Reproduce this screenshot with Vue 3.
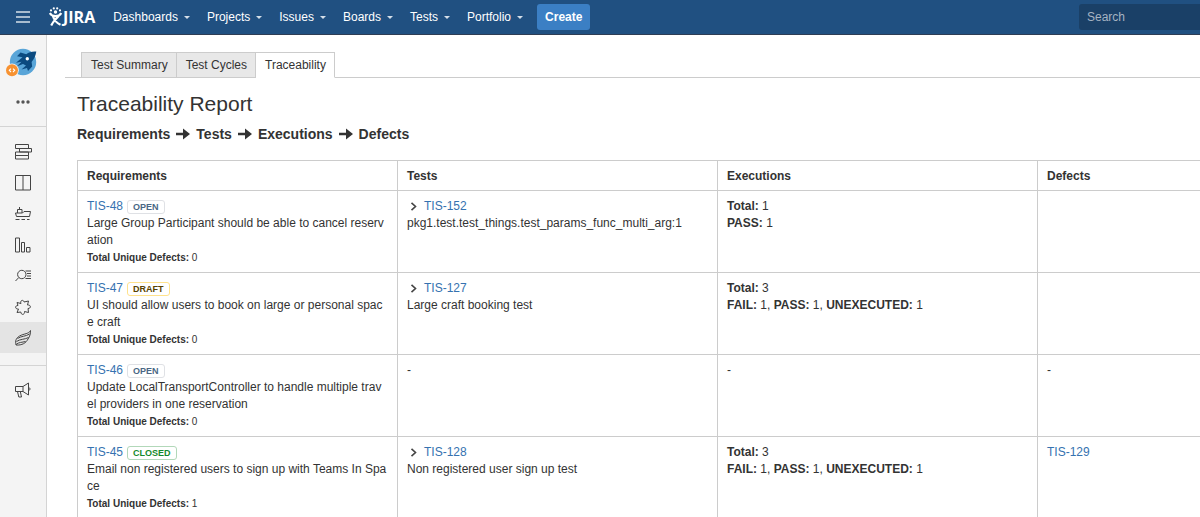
<template>
  <div class="page">
    <header class="topbar">
      <button class="menu-btn" type="button" aria-label="Menu">
        <svg width="14" height="12" viewBox="0 0 14 12">
          <path d="M0 1h14M0 6h14M0 11h14" stroke="#d5dfe9" stroke-width="1.6" />
        </svg>
      </button>
      <a class="logo" href="#">
        <svg width="14" height="20" viewBox="0 0 14 20" fill="#fff">
          <circle cx="2" cy="3.4" r="1.1" />
          <circle cx="4.8" cy="1.4" r="1.1" />
          <circle cx="8.2" cy="1.4" r="1.1" />
          <circle cx="11" cy="3.4" r="1.1" />
          <circle cx="6.5" cy="5" r="1.7" />
          <path
            d="M.8 6C2 8.500 4 9.200 6.500 9.200S11 8.500 12.200 6M10 8.500C8 11.500 5 13 2.200 18.400M3.600 8.500c1.500 4.500 4 7.500 7.900 9.300"
            fill="none"
            stroke="#fff"
            stroke-width="2.2"
          />
        </svg>
        <span>JIRA</span>
      </a>
      <nav class="nav">
        <button v-for="item in navItems" :key="item" type="button" class="nav-item">
          {{ item }}<i class="caret"></i>
        </button>
      </nav>
      <button class="create" type="button">Create</button>
      <input class="search" type="text" placeholder="Search" aria-label="Search" />
    </header>

    <div class="body">
      <aside class="sidebar">
        <div class="project">
          <a class="avatar" href="#" aria-label="Project">
            <svg width="36" height="30" viewBox="0 0 36 30">
              <circle cx="18" cy="14" r="13.2" fill="#59a5d8" />
              <path
                d="M31.3 3.6C27 3.3 23.8 4.2 21.3 6.3L15.5 4.6 12 8.2 17.5 9.300 11 14.8 16.500 13.8 12 18.300 18 16 21 17.500 16.500 21.500 22 20 23 23 27.200 18.500 26.600 14C29.300 11 30.800 7.500 31.300 3.600z"
                fill="#0b4a80"
              />
              <circle cx="22.3" cy="10.7" r="1.7" fill="#fff" />
              <circle cx="7" cy="22.3" r="6.8" fill="#f4f4f4" />
              <circle cx="7" cy="22.3" r="6" fill="#f79232" />
              <path d="m6 20.600-1.700 1.700L6 24M8 20.600l1.700 1.700L8 24" fill="none" stroke="#fff" stroke-width="1.1" />
            </svg>
          </a>
          <button class="more" type="button" aria-label="More">
            <svg width="14" height="4" viewBox="0 0 14 4" fill="#555">
              <circle cx="2" cy="2" r="1.7" />
              <circle cx="7" cy="2" r="1.7" />
              <circle cx="12" cy="2" r="1.7" />
            </svg>
          </button>
        </div>
        <div class="side-group">
          <a
            v-for="icon in sideIcons"
            :key="icon.name"
            href="#"
            class="side-item"
            :class="{ active: icon.active }"
            :aria-label="icon.name"
          >
            <svg width="18" height="18" viewBox="0 0 18 18"><path :d="icon.path" /></svg>
          </a>
        </div>
        <div class="side-group last">
          <a href="#" class="side-item" aria-label="Feedback">
            <svg width="18" height="18" viewBox="0 0 18 18">
              <path
                d="M1.500 5.500h7.500v5H1.500zM9 5.500l5.500-3.500v12L9 10.500M14.500 6.500c2 .3 2 2.700 0 3M3.500 10.500l1.300 5.500h2.700l-1.200-5.500"
              />
            </svg>
          </a>
        </div>
      </aside>

      <main class="content">
        <nav class="tabs">
          <a
            v-for="tab in tabs"
            :key="tab"
            href="#"
            class="tab"
            :class="{ active: tab === activeTab }"
            @click.prevent="activeTab = tab"
          >{{ tab }}</a>
        </nav>

        <section class="report">
          <h1>Traceability Report</h1>
          <h2 class="trail">
            <template v-for="(col, i) in columns" :key="col">
              <svg v-if="i > 0" width="14" height="12" viewBox="0 0 14 12">
                <path d="M0 4.800H7V.6L14 6 7 11.400V7.200H0z" fill="#333" />
              </svg>
              <span>{{ col }}</span>
            </template>
          </h2>

          <table>
            <thead>
              <tr>
                <th v-for="col in columns" :key="col">{{ col }}</th>
              </tr>
            </thead>
            <tbody>
              <tr v-for="row in rows" :key="row.key">
                <td>
                  <div class="issue">
                    <a href="#">{{ row.key }}</a>
                    <span class="status" :class="row.status.toLowerCase()">{{ row.status }}</span>
                  </div>
                  <div>{{ row.summary }}</div>
                  <div class="unique"><b>Total Unique Defects:</b> {{ row.unique }}</div>
                </td>
                <td>
                  <template v-if="row.test">
                    <div class="issue">
                      <svg class="chevron" width="8" height="10" viewBox="0 0 8 10">
                        <path d="m1.500.8 4 3.700-4 3.700" fill="none" stroke="#444" stroke-width="1.6" />
                      </svg>
                      <a href="#">{{ row.test.key }}</a>
                    </div>
                    <div>{{ row.test.name }}</div>
                  </template>
                  <template v-else>-</template>
                </td>
                <td>
                  <template v-if="row.total">
                    <div><b>Total:</b>&nbsp;{{ row.total }}</div>
                    <div>
                      <span v-for="(run, i) in row.runs" :key="run"><b>{{ run }}:</b>&nbsp;1{{ i < row.runs.length - 1 ? ', ' : '' }}</span>
                    </div>
                  </template>
                  <template v-else>-</template>
                </td>
                <td>
                  <a v-if="row.defect && row.defect !== '-'" href="#">{{ row.defect }}</a>
                  <template v-else>{{ row.defect }}</template>
                </td>
              </tr>
            </tbody>
          </table>
        </section>
      </main>
    </div>
  </div>
</template>

<script setup>
import { ref } from 'vue'

const navItems = ['Dashboards', 'Projects', 'Issues', 'Boards', 'Tests', 'Portfolio']
const tabs = ['Test Summary', 'Test Cycles', 'Traceability']
const activeTab = ref('Traceability')
const columns = ['Requirements', 'Tests', 'Executions', 'Defects']

const sideIcons = [
  {
    name: 'Backlog',
    path: 'M1.500 1.500h13v4h-13zM5.500 5.500h12v3.500h-12zM1.500 9h13v3.500h-13zM1.500 12.500h13v3.500h-13z',
  },
  { name: 'Board', path: 'M1.500 1.500h15v14.500h-15zM9 1.500v14.500' },
  {
    name: 'Releases',
    path: 'M2.500 11.500 1.500 8h7l1.500-1.500h6.500L15.500 11.500zM3.500 8V4.500h4.500v3.500M5.500 4.500V2M1.500 14.500h4M7.500 14.500h3.500M13 14.500h2.500',
  },
  { name: 'Reports', path: 'M1.500 2h4v14h-4zM7.500 6.500h3v9.500h-3zM12.500 11.500h3.500v4.500h-3.500z' },
  {
    name: 'Issues',
    path: 'M12 7.500a4.200 4.200 0 1 1-8.400 0a4.200 4.200 0 1 1 8.400 0M4.800 10.500 1.500 14M11.500 4h5.500M13 6.500h4M13 9h4M11.500 11.500h5.500',
  },
  {
    name: 'Components',
    path: 'M7 5.500C5.500 2.500 9.500 1 10 4L14.500 3 13.500 7C17 6.500 17.500 10.500 14 10.500L14.500 14.500 10.500 13.500C11 17 7 17.500 6.800 14L3 14.500 4.500 11C1 11.500 .5 7.500 4 7.500L3 4.500z',
  },
  {
    name: 'Tests',
    active: true,
    path: 'M16.500 1.500C15 5 10 4.500 5.500 7 2 9 1 12 2 16c6 .5 10-2 12-6 2-3 2.500-5 2.500-8.500zM15.500 5C12 7.500 7 7 3.500 9.500M14.500 8.500C11 10.500 6 10 2.500 12.500M11.500 12.500C8 13.500 5 13 2 15.500',
  },
]

const rows = [
  {
    key: 'TIS-48',
    status: 'OPEN',
    summary: 'Large Group Participant should be able to cancel reservation',
    unique: 0,
    test: { key: 'TIS-152', name: 'pkg1.test.test_things.test_params_func_multi_arg:1' },
    total: 1,
    runs: ['PASS'],
    defect: '',
  },
  {
    key: 'TIS-47',
    status: 'DRAFT',
    summary: 'UI should allow users to book on large or personal space craft',
    unique: 0,
    test: { key: 'TIS-127', name: 'Large craft booking test' },
    total: 3,
    runs: ['FAIL', 'PASS', 'UNEXECUTED'],
    defect: '',
  },
  {
    key: 'TIS-46',
    status: 'OPEN',
    summary: 'Update LocalTransportController to handle multiple travel providers in one reservation',
    unique: 0,
    defect: '-',
  },
  {
    key: 'TIS-45',
    status: 'CLOSED',
    summary: 'Email non registered users to sign up with Teams In Space',
    unique: 1,
    test: { key: 'TIS-128', name: 'Non registered user sign up test' },
    total: 3,
    runs: ['FAIL', 'PASS', 'UNEXECUTED'],
    defect: 'TIS-129',
  },
]
</script>

<style>
body {
  margin: 0;
  background: #fff;
}
</style>

<style scoped>
.page {
  display: flex;
  flex-direction: column;
  height: 100vh;
  overflow: hidden;
  font-family: "Liberation Sans", Arial, sans-serif;
  font-size: 12px;
  line-height: 17px;
  color: #333;
}
a {
  color: #3572b0;
  text-decoration: none;
}
button {
  border: 0;
  padding: 0;
  background: none;
  font: inherit;
  cursor: pointer;
}

/* top bar */
.topbar {
  display: flex;
  align-items: center;
  flex: none;
  height: 35px;
  background: #205081;
  border-bottom: 1px solid #2e3d54;
  box-sizing: border-box;
}
.menu-btn {
  display: flex;
  margin-left: 16px;
}
.logo {
  display: flex;
  align-items: center;
  margin-left: 19px;
  color: #fff;
  font-family: "Open Sans", sans-serif;
  font-size: 16px;
  font-weight: 700;
}
.nav {
  display: flex;
  gap: 17px;
  margin-left: 18px;
}
.nav-item {
  display: flex;
  align-items: center;
  gap: 6px;
  color: #fff;
}
.caret {
  border: 3px solid transparent;
  border-top-color: #d5dfe9;
  border-bottom: 0;
}
.create {
  height: 26px;
  margin-left: 14px;
  padding: 0 8px;
  border-radius: 3px;
  background: #3b7fc4;
  color: #fff;
  font-weight: 700;
}
.search {
  width: 121px;
  height: 26px;
  margin-left: auto;
  padding: 0 8px;
  border: 0;
  border-radius: 3px 0 0 3px;
  background: #1a4067;
  color: #fff;
  font: inherit;
  box-sizing: border-box;
}
.search::placeholder {
  color: #a6b3c2;
}

.body {
  display: flex;
  flex: 1;
  min-height: 0;
}

/* sidebar */
.sidebar {
  flex: none;
  width: 47px;
  background: #f4f4f4;
  border-right: 1px solid #d4d4d4;
  box-sizing: border-box;
}
.project {
  display: flex;
  flex-direction: column;
  align-items: center;
  gap: 22px;
  padding: 13px 0 22px;
}
.avatar,
.more {
  display: flex;
}
.side-group {
  padding: 9px 0 12px;
  border-top: 1px solid #d4d4d4;
}
.side-group.last {
  padding: 8px 0;
}
.side-item {
  display: flex;
  align-items: center;
  justify-content: center;
  height: 31px;
}
.side-item.active {
  background: #e4e4e4;
}
.side-item path {
  fill: none;
  stroke: #444;
}

/* content */
.content {
  flex: 1;
  min-width: 0;
  overflow: hidden;
  padding: 17px 0 0 18px;
}
.tabs {
  display: flex;
  padding-left: 16px;
  border-bottom: 1px solid #ccc;
}
.tab {
  margin-bottom: -1px;
  padding: 4px 8px 3px 9px;
  border: 1px solid #ccc;
  border-left-width: 0;
  background: #e8e8e8;
  color: #333;
}
.tab:first-child {
  border-left-width: 1px;
}
.tab.active {
  background: #fff;
  border-bottom-color: #fff;
}
.report {
  padding-left: 12px;
}
h1 {
  margin: 14px 0 0;
  font-size: 21px;
  font-weight: 400;
  line-height: 24px;
}
.trail {
  display: flex;
  align-items: center;
  gap: 6px;
  margin: 9px 0 17px;
  font-size: 14px;
  line-height: 18px;
}
table {
  width: 100%;
  min-width: 1281px;
  table-layout: fixed;
  border-collapse: collapse;
}
th,
td {
  padding: 7px 9px 5px;
  border: 1px solid #ccc;
  text-align: left;
  vertical-align: top;
  word-break: break-all;
}
.issue {
  display: flex;
  align-items: center;
  gap: 4px;
  height: 17px;
}
.status {
  padding: 0 5px;
  border: 1px solid #dfe1e5;
  border-radius: 3px;
  font-size: 9px;
  font-weight: 700;
  line-height: 12px;
  color: #4a6785;
}
.status.draft {
  border-color: #ffe28c;
  color: #594300;
}
.status.closed {
  border-color: #b2d8b9;
  color: #14892c;
}
.unique {
  font-size: 10px;
  line-height: 18px;
}
.chevron {
  margin: 0 2px 0 3px;
}
</style>
